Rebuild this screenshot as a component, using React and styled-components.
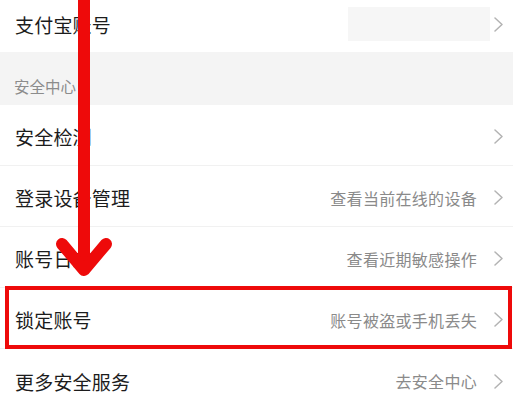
import React from "react";
import styled, { createGlobalStyle } from "styled-components";

const GlobalStyle = createGlobalStyle`
  html, body {
    margin: 0;
    padding: 0;
    background: #fff;
  }
  body {
    font-family: "Noto Sans CJK SC", "Noto Sans", sans-serif;
  }
`;

const Page = styled.div`
  position: relative;
  width: 522px;
  height: 400px;
  overflow: hidden;
  background: #fff;
`;

const List = styled.div`
  width: 513px;
`;

const Row = styled.div`
  position: relative;
  display: flex;
  align-items: center;
  justify-content: space-between;
  height: ${(p) => p.$height || 61}px;
  padding: ${(p) => (p.$lift ? "0" : "3px")} 10px ${(p) => p.$lift || 0}px 15px;
  box-sizing: border-box;
  border-bottom: ${(p) => (p.$last ? "none" : "1px solid #f1f1f1")};

  ${(p) =>
    p.$marked &&
    `
    &::after {
      content: "";
      position: absolute;
      left: 5px;
      right: 1px;
      top: -2px;
      bottom: -1px;
      border: 4px solid #ee0a0a;
      pointer-events: none;
      z-index: 1;
    }
  `}
`;

const Title = styled.span`
  font-size: 19px;
  color: #1c1c1c;
  letter-spacing: 0.2px;
`;

const Right = styled.div`
  display: flex;
  align-items: center;
  gap: 17px;
`;

const Hint = styled.span`
  font-size: 16px;
  color: #8a8a8a;
  letter-spacing: 0.3px;
`;

const Blurred = styled.div`
  width: 142px;
  height: 34px;
  background: #f6f6f6;
  margin-right: -13px;
`;

const Section = styled.div`
  display: flex;
  align-items: flex-end;
  height: 53px;
  padding: 0 14px 8px;
  box-sizing: border-box;
  background: #f4f4f4;
  font-size: 15.5px;
  color: #8c8c8c;
`;

const Arrow = styled.svg`
  position: absolute;
  left: 0;
  top: 0;
  pointer-events: none;
  z-index: 2;
`;

const Chevron = () => (
  <svg width="9" height="15" viewBox="0 0 9 15">
    <polyline
      points="1,1 8,7.5 1,14"
      fill="none"
      stroke="#b3b3b3"
      strokeWidth="1.5"
      strokeLinecap="round"
      strokeLinejoin="round"
    />
  </svg>
);

const items = [
  { title: "安全检测" },
  { title: "登录设备管理", hint: "查看当前在线的设备" },
  { title: "账号日志", hint: "查看近期敏感操作" },
  { title: "锁定账号", hint: "账号被盗或手机丢失", marked: true },
  { title: "更多安全服务", hint: "去安全中心", last: true },
];

export default function App() {
  return (
    <Page>
      <GlobalStyle />
      <List>
        <Row $height={52} $lift={4} $last>
          <Title>支付宝账号</Title>
          <Right>
            <Blurred />
            <Chevron />
          </Right>
        </Row>
        <Section>安全中心</Section>
        {items.map((it) => (
          <Row key={it.title} $marked={it.marked} $last={it.last}>
            <Title>{it.title}</Title>
            <Right>
              {it.hint && <Hint>{it.hint}</Hint>}
              <Chevron />
            </Right>
          </Row>
        ))}
      </List>
      <Arrow width="522" height="400" viewBox="0 0 522 400">
        <line x1="84" y1="0" x2="84" y2="262" stroke="#ee0a0a" strokeWidth="12" />
        <polyline
          points="62,244 84,270 106,244"
          fill="none"
          stroke="#ee0a0a"
          strokeWidth="12"
          strokeLinecap="round"
          strokeLinejoin="round"
        />
      </Arrow>
    </Page>
  );
}
